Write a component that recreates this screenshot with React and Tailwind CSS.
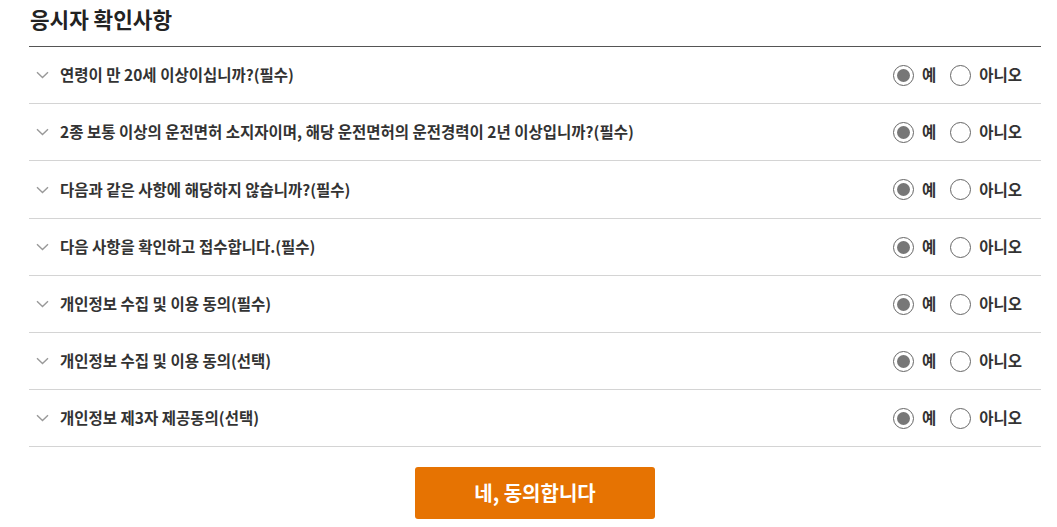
import React from "react";

const items = [
  "연령이 만 20세 이상이십니까?(필수)",
  "2종 보통 이상의 운전면허 소지자이며, 해당 운전면허의 운전경력이 2년 이상입니까?(필수)",
  "다음과 같은 사항에 해당하지 않습니까?(필수)",
  "다음 사항을 확인하고 접수합니다.(필수)",
  "개인정보 수집 및 이용 동의(필수)",
  "개인정보 수집 및 이용 동의(선택)",
  "개인정보 제3자 제공동의(선택)",
];

function Chevron() {
  return (
    <svg width="13" height="8" viewBox="0 0 13 8" className="shrink-0">
      <path d="M1 1.2 L6.5 6.5 L12 1.2" fill="none" stroke="#999" strokeWidth="1.4" />
    </svg>
  );
}

function Radio({ checked }) {
  return (
    <span className="w-[21px] h-[21px] rounded-full border border-[#666] flex items-center justify-center bg-white shrink-0">
      {checked && <span className="w-[13px] h-[13px] rounded-full bg-[#777]" />}
    </span>
  );
}

export default function App() {
  return (
    <div
      className="w-[1057px] h-[527px] bg-white text-[#333] overflow-hidden"
      style={{ fontFamily: '"Noto Sans CJK KR", "Noto Sans", sans-serif' }}
    >
      <div className="ml-[29px] w-[1012px]">
        <h2 className="h-[46px] pt-[2px] pl-[1px] text-[21.3px] font-bold leading-[34px] text-[#222]">
          응시자 확인사항
        </h2>
        <div className="border-t border-[#555]">
          {items.map((t, i) => (
            <div
              key={i}
              className={`${i === 2 ? "h-[58px]" : "h-[57px]"} border-b border-[#d4d4d4] flex items-center`}
            >
              <div className="pl-[7px] w-[31px] flex items-center">
                <Chevron />
              </div>
              <span className="text-[15.5px] font-bold text-[#333] flex-1">{t}</span>
              <div className="flex items-center pr-[19px]">
                <Radio checked />
                <span className="ml-[8px] text-[15.5px] font-bold text-[#333]">예</span>
                <span className="ml-[14px]"><Radio /></span>
                <span className="ml-[8px] text-[15.5px] font-bold text-[#333]">아니오</span>
              </div>
            </div>
          ))}
        </div>
        <div className="flex justify-center pt-[20px]">
          <button className="w-[240px] h-[52px] rounded-[3px] bg-[#e67302] text-white text-[20px] font-bold">
            네, 동의합니다
          </button>
        </div>
      </div>
    </div>
  );
}
